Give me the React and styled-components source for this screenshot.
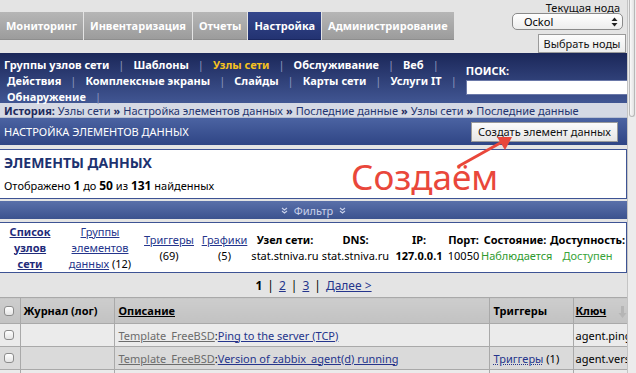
import React from 'react'
import styled, { createGlobalStyle } from 'styled-components'

const GlobalStyle = createGlobalStyle`
  html, body { margin:0; padding:0; }
  body {
    background:#e4e4e4;
    font-family:"Noto Sans", "DejaVu Sans", sans-serif;
    font-size:11px;
    color:#000;
    overflow:hidden;
  }
`

const Frame = styled.div`
  display:flex;
  width:636px;
  height:373px;
  overflow:hidden;
`
const Page = styled.div`
  position:relative;
  width:627px;
  flex:none;
  overflow:hidden;
  background:#e4e4e4;
`
const Scrollbar = styled.div`
  flex:1;
  background:#ececec;
  border-left:1px solid #c4c4c4;
`
const Thumb = styled.div`
  margin:0 1px;
  height:116px;
  background:linear-gradient(90deg,#fafafa,#e2e2e2);
  border:1px solid #b8b8b8;
  border-top:none;
  border-radius:0 0 5px 5px;
`

/* top strip */
const TopArea = styled.div`
  display:flex;
  justify-content:space-between;
  height:53px;
`
const Tabs = styled.div`
  display:flex;
  gap:1px;
  margin-top:12px;
  height:27px;
`
const Tab = styled.div`
  display:flex;
  align-items:center;
  height:27px;
  padding:0 6px;
  color:#fff;
  font-weight:bold;
  font-size:11px;
  background:${p => p.$active ? 'linear-gradient(#34478c,#233372)' : 'linear-gradient(#b6b6b6,#9c9c9c)'};
  border-bottom:1px solid ${p => p.$active ? '#1a2760' : '#8e8e8e'};
`
const NodePanel = styled.div`
  width:115px;
  display:flex;
  flex-direction:column;
  align-items:flex-end;
  padding-right:1px;
`
const NodeLabel = styled.div`
  margin-top:2px;
  margin-right:6px;
  height:11px;
  line-height:11px;
  font-size:11px;
  color:#111;
`
const NodeSelect = styled.div`
  box-sizing:border-box;
  width:111px;
  height:17px;
  margin-right:3px;
  display:flex;
  align-items:center;
  justify-content:space-between;
  padding:0 4px 0 11px;
  border:1px solid #8a8a8a;
  border-radius:5px;
  background:linear-gradient(#ffffff,#ededed);
  font-size:11px;
`
const NodeButton = styled.button`
  box-sizing:border-box;
  margin-top:4px;
  width:88px;
  height:20px;
  padding:0;
  border:1px solid #9a9a9a;
  background:linear-gradient(#fcfcfc,#ececec);
  font-family:inherit;
  font-size:11px;
  color:#111;
`

/* blue navigation */
const NavBar = styled.div`
  display:flex;
  justify-content:space-between;
  height:50px;
  background:linear-gradient(#1b2759,#415693);
`
const NavMenu = styled.div`
  padding-top:3px;
`
const NavRow = styled.div`
  display:flex;
  height:16px;
  align-items:center;
  padding-left:${p => p.$indent}px;
`
const NavItem = styled.span`
  color:${p => p.$active ? '#f6c21f' : '#fff'};
  font-weight:bold;
  font-size:11px;
  white-space:nowrap;
`
const NavSep = styled.span`
  color:#8c97bf;
  padding:0 9px;
  font-size:11px;
`
const SearchBox = styled.div`
  width:163px;
  padding:11px 7px 0 0;
  display:flex;
  flex-direction:column;
`
const SearchLabel = styled.div`
  color:#fff;
  font-weight:bold;
  font-size:11px;
  height:14px;
  line-height:14px;
`
const SearchInput = styled.input`
  box-sizing:border-box;
  margin-top:2px;
  width:162px;
  height:15px;
  border:1px solid #6a78a8;
  background:#fff;
  padding:0;
`

const History = styled.div`
  height:15px;
  line-height:15px;
  padding-left:4px;
  background:#d5d9e4;
  color:#23346f;
  font-size:11px;
  white-space:nowrap;
  border-bottom:1px solid #b7bfd2;
  box-sizing:border-box;
`
const HistTitle = styled.b`
  color:#1d2a5c;
`
const Raquo = styled.b`
  color:#1d2a5c;
  padding:0 3px;
`

const HeaderBar = styled.div`
  height:27px;
  display:flex;
  align-items:center;
  justify-content:space-between;
  padding:0 9px 0 4px;
  background:linear-gradient(#4b63a2,#2f4585);
  color:#fff;
  font-size:11px;
`
const CreateButton = styled.button`
  height:20px;
  padding:0 6px;
  border:1px solid #9a9a9a;
  background:linear-gradient(#fbfbfb,#e6e6e6);
  font-family:inherit;
  font-size:11px;
  color:#111;
`

const InfoBox = styled.div`
  margin-top:4px;
  height:50px;
  box-sizing:border-box;
  background:#fff;
  border:1px solid #3d5394;
  border-left:none;
  padding:2px 4px 0;
`
const BoxTitle = styled.div`
  color:#1d3270;
  font-weight:bold;
  font-size:14px;
  height:21px;
  line-height:21px;
`
const CountLine = styled.div`
  margin-top:4px;
  font-size:11px;
  b { font-size:12px; }
`

const FilterBar = styled.div`
  margin-top:2px;
  height:18px;
  display:flex;
  align-items:center;
  justify-content:center;
  gap:6px;
  background:linear-gradient(#5a70aa,#3b528f);
  color:#c9d1ea;
  font-size:11px;
`

const HostBox = styled.div`
  margin-top:3px;
  height:51px;
  box-sizing:border-box;
  background:#fff;
  border:1px solid #3d5394;
  border-left:none;
`
const HostTable = styled.table`
  border-collapse:collapse;
  table-layout:fixed;
  width:626px;
  height:49px;
`
const Col = styled.col`
  width:${p => p.$w}px;
`
const HostCell = styled.td`
  padding:0;
  text-align:center;
  vertical-align:middle;
  line-height:16px;
  font-size:11px;
  white-space:nowrap;
`
const State = styled.span`
  color:${p => p.$color};
`
const BoldLink = styled.a`
  color:#1f2b7a;
  font-weight:bold;
  text-decoration:underline;
`
const Link = styled.a`
  color:#25358c;
  text-decoration:underline;
  text-decoration-style:${p => p.$dotted ? 'dotted' : 'solid'};
`
const GrayLink = styled.a`
  color:#6c6c6c;
  text-decoration:underline;
`

const Pager = styled.div`
  height:25px;
  display:flex;
  align-items:center;
  justify-content:center;
  font-size:12px;
  gap:5px;
`

const ItemsTable = styled.table`
  border-collapse:collapse;
  table-layout:fixed;
  width:690px;
  margin-top:-1px;
`
const HeadCell = styled.th`
  height:25px;
  padding:0 0 0 ${p => p.$pad ?? 4}px;
  text-align:left;
  font-size:11px;
  background:linear-gradient(#cdcdcd,#c2c2c2);
  border:1px solid #a9a9a9;
  border-left:${p => p.$first ? 'none' : '1px solid #a9a9a9'};
  white-space:nowrap;
  u { text-decoration:underline; }
`
const Row = styled.tr`
  background:${p => p.$alt ? '#dadada' : '#ebebeb'};
`
const Cell = styled.td`
  height:22px;
  padding:0 0 0 ${p => p.$pad ?? 4}px;
  font-size:11px;
  border:1px solid #a9a9a9;
  border-left:${p => p.$first ? 'none' : '1px solid #a9a9a9'};
  white-space:nowrap;
  overflow:hidden;
`
const Check = styled.input`
  appearance:none;
  display:block;
  margin:0 0 0 4px;
  width:10px;
  height:10px;
  border:1px solid #8b8b8b;
  border-radius:3px;
  background:linear-gradient(#ffffff,#e4e4e4);
`
const SortMark = styled.svg`
  vertical-align:middle;
  margin-left:12px;
`

const Note = styled.div`
  position:absolute;
  left:351px;
  top:157px;
  color:#e9473b;
  font-size:35px;
  line-height:40px;
  font-family:"Noto Sans", sans-serif;
`
const Arrow = styled.svg`
  position:absolute;
  left:450px;
  top:128px;
`

const navRows = [
  { indent: 4, items: ['Группы узлов сети', 'Шаблоны', 'Узлы сети', 'Обслуживание', 'Веб'] },
  { indent: 7, items: ['Действия', 'Комплексные экраны', 'Слайды', 'Карты сети', 'Услуги IT'] },
  { indent: 7, items: ['Обнаружение'] },
]

const Updown = () => (
  <svg width="7" height="10" viewBox="0 0 7 10">
    <path d="M3.5 0.5 L6.5 4 L0.5 4 Z" fill="#222" />
    <path d="M3.5 9.5 L6.5 6 L0.5 6 Z" fill="#222" />
  </svg>
)

const Chevrons = () => (
  <svg width="7" height="7" viewBox="0 0 7 7">
    <path d="M1 1 L3.5 3 L6 1 M1 4 L3.5 6 L6 4" fill="none" stroke="#c9d1ea" strokeWidth="1.1" />
  </svg>
)

const SortIcon = () => (
  <SortMark width="12" height="14" viewBox="0 0 12 14">
    <path d="M3 1 L6 1 L6 8 L8.5 8 L4.5 13 L0.5 8 L3 8 Z" fill="#b5b5b5" />
    <path d="M10 1 L10 6" stroke="#3a5db0" strokeWidth="1.2" />
  </SortMark>
)

export default function App() {
  return (
    <>
      <GlobalStyle />
      <Frame>
        <Page>
          <TopArea>
            <Tabs>
              <Tab>Мониторинг</Tab>
              <Tab>Инвентаризация</Tab>
              <Tab>Отчеты</Tab>
              <Tab $active>Настройка</Tab>
              <Tab>Администрирование</Tab>
            </Tabs>
            <NodePanel>
              <NodeLabel>Текущая нода</NodeLabel>
              <NodeSelect>
                <span>Ockol</span>
                <Updown />
              </NodeSelect>
              <NodeButton>Выбрать ноды</NodeButton>
            </NodePanel>
          </TopArea>

          <NavBar>
            <NavMenu>
              {navRows.map((row, i) => (
                <NavRow key={i} $indent={row.indent}>
                  {row.items.map(item => (
                    <React.Fragment key={item}>
                      <NavItem $active={item === 'Узлы сети'}>{item}</NavItem>
                      <NavSep>|</NavSep>
                    </React.Fragment>
                  ))}
                </NavRow>
              ))}
            </NavMenu>
            <SearchBox>
              <SearchLabel>ПОИСК:</SearchLabel>
              <SearchInput type="text" />
            </SearchBox>
          </NavBar>

          <History>
            <HistTitle>История:</HistTitle> Узлы сети<Raquo>»</Raquo>Настройка элементов данных<Raquo>»</Raquo>Последние данные<Raquo>»</Raquo>Узлы сети<Raquo>»</Raquo>Последние данные
          </History>

          <HeaderBar>
            <span>НАСТРОЙКА ЭЛЕМЕНТОВ ДАННЫХ</span>
            <CreateButton>Создать элемент данных</CreateButton>
          </HeaderBar>

          <InfoBox>
            <BoxTitle>ЭЛЕМЕНТЫ ДАННЫХ</BoxTitle>
            <CountLine>Отображено <b>1</b> до <b>50</b> из <b>131</b> найденных</CountLine>
          </InfoBox>

          <FilterBar>
            <Chevrons />
            <span>Фильтр</span>
            <Chevrons />
          </FilterBar>

          <HostBox>
            <HostTable>
              <colgroup>
                <Col $w={60} /><Col $w={80} /><Col $w={58} /><Col $w={53} /><Col $w={68} />
                <Col $w={73} /><Col $w={54} /><Col $w={35} /><Col $w={68} /><Col $w={77} />
              </colgroup>
              <tbody>
                <tr>
                  <HostCell>
                    <BoldLink>Список</BoldLink><br /><BoldLink>узлов</BoldLink><br /><BoldLink>сети</BoldLink>
                  </HostCell>
                  <HostCell>
                    <Link>Группы</Link><br /><Link>элементов</Link><br /><Link>данных</Link> (12)
                  </HostCell>
                  <HostCell><Link>Триггеры</Link><br />(69)</HostCell>
                  <HostCell><Link>Графики</Link><br />(5)</HostCell>
                  <HostCell><b>Узел сети:</b><br />stat.stniva.ru</HostCell>
                  <HostCell><b>DNS:</b><br />stat.stniva.ru</HostCell>
                  <HostCell><b>IP:</b><br /><b>127.0.0.1</b></HostCell>
                  <HostCell><b>Порт:</b><br />10050</HostCell>
                  <HostCell><b>Состояние:</b><br /><State $color="#2e9a2e">Наблюдается</State></HostCell>
                  <HostCell><b>Доступность:</b><br /><State $color="#3aa43a">Доступен</State></HostCell>
                </tr>
              </tbody>
            </HostTable>
          </HostBox>

          <Pager>
            <b>1</b><span>|</span><Link>2</Link><span>|</span><Link>3</Link><span>|</span><Link>Далее &gt;</Link>
          </Pager>

          <ItemsTable>
            <colgroup>
              <Col $w={20} /><Col $w={94} /><Col $w={375} /><Col $w={84} /><Col $w={117} />
            </colgroup>
            <thead>
              <tr>
                <HeadCell $first $pad={0}><Check type="checkbox" /></HeadCell>
                <HeadCell $pad={3}>Журнал (лог)</HeadCell>
                <HeadCell><u>Описание</u></HeadCell>
                <HeadCell>Триггеры</HeadCell>
                <HeadCell $pad={2}><u>Ключ</u><SortIcon /></HeadCell>
              </tr>
            </thead>
            <tbody>
              <Row>
                <Cell $first $pad={0}><Check type="checkbox" /></Cell>
                <Cell />
                <Cell><GrayLink>Template_FreeBSD</GrayLink>:<Link>Ping to the server (TCP)</Link></Cell>
                <Cell />
                <Cell $pad={2}>agent.ping</Cell>
              </Row>
              <Row $alt>
                <Cell $first $pad={0}><Check type="checkbox" /></Cell>
                <Cell />
                <Cell><GrayLink>Template_FreeBSD</GrayLink>:<Link>Version of zabbix_agent(d) running</Link></Cell>
                <Cell><Link $dotted>Триггеры</Link> (1)</Cell>
                <Cell $pad={2}>agent.version</Cell>
              </Row>
              <Row>
                <Cell $first $pad={0}><Check type="checkbox" /></Cell>
                <Cell />
                <Cell />
                <Cell />
                <Cell />
              </Row>
            </tbody>
          </ItemsTable>

          <Note>Создаём</Note>
          <Arrow width="70" height="45" viewBox="0 0 70 45">
            <path d="M9 38 L52 14" stroke="#e9473b" strokeWidth="3" strokeLinecap="round" />
            <path d="M62 9 L47 9 L55 22 Z" fill="#e9473b" />
          </Arrow>
        </Page>
        <Scrollbar><Thumb /></Scrollbar>
      </Frame>
    </>
  )
}
